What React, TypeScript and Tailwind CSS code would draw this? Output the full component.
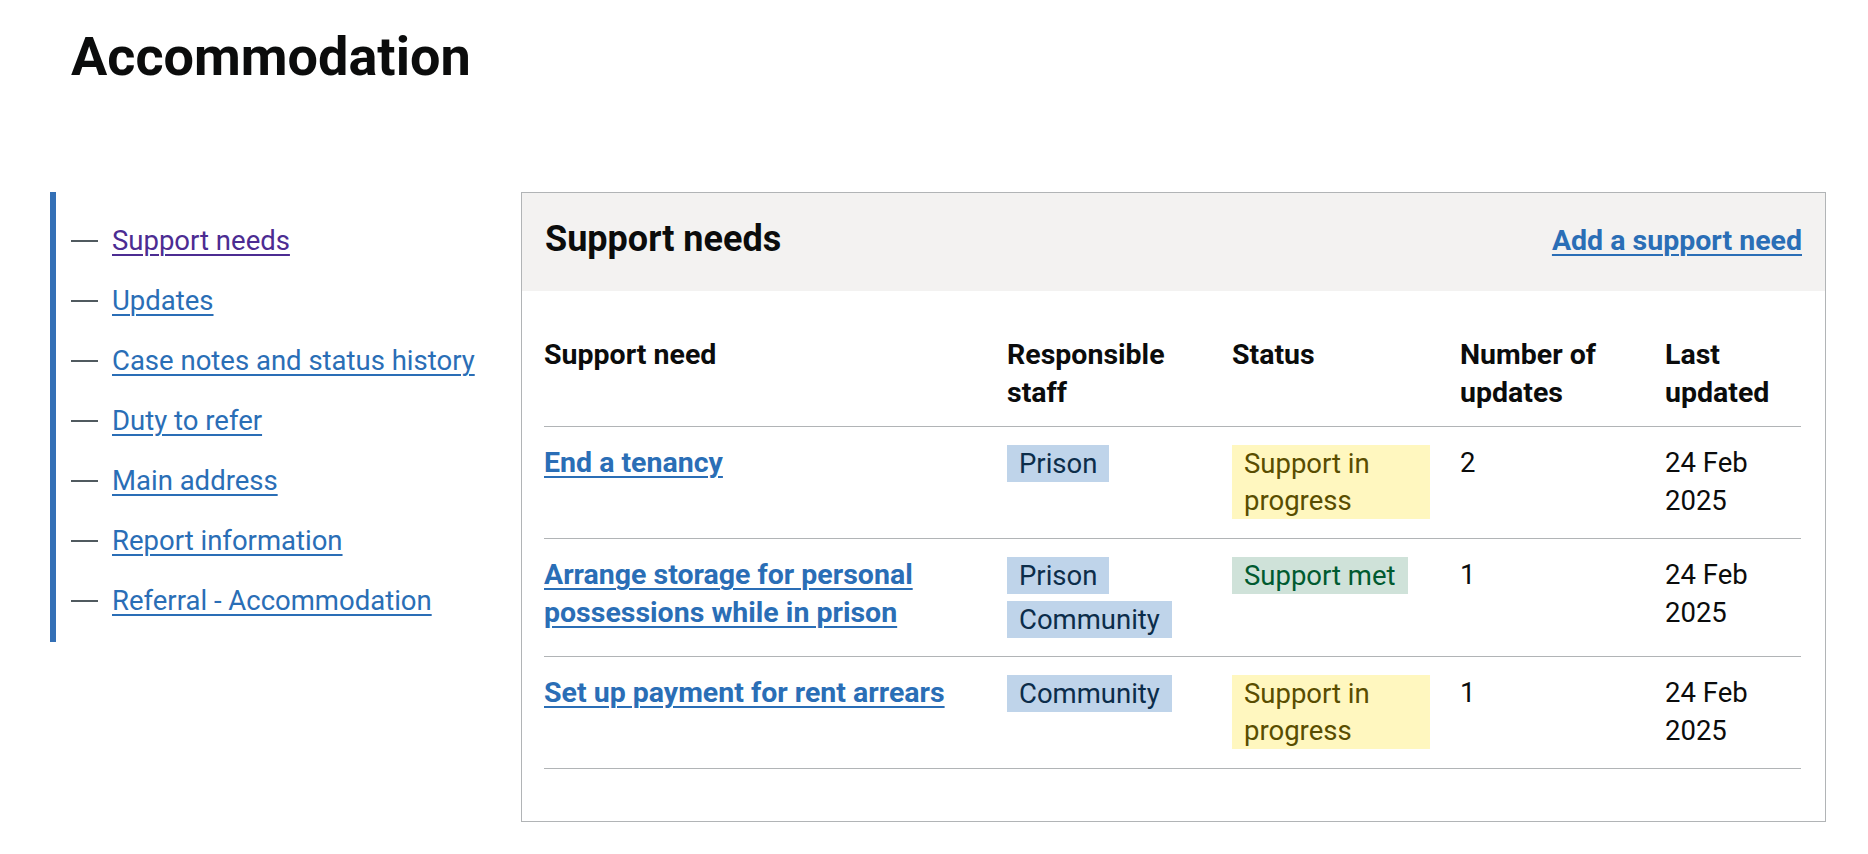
const navItems = [
  { label: "Support needs", visited: true },
  { label: "Updates" },
  { label: "Case notes and status history" },
  { label: "Duty to refer" },
  { label: "Main address" },
  { label: "Report information" },
  { label: "Referral - Accommodation" },
];

type Tone = "blue" | "yellow" | "green";

const toneClass: Record<Tone, string> = {
  blue: "bg-[#bfd4ea] text-[#0c2d4a]",
  yellow: "bg-[#fff7bf] text-[#594d00]",
  green: "bg-[#cfe2d9] text-[#005a30]",
};

const rows: {
  need: string;
  staff: string[];
  status: { label: string; tone: Tone };
  updates: string;
  date: string;
}[] = [
  {
    need: "End a tenancy",
    staff: ["Prison"],
    status: { label: "Support in progress", tone: "yellow" },
    updates: "2",
    date: "24 Feb 2025",
  },
  {
    need: "Arrange storage for personal possessions while in prison",
    staff: ["Prison", "Community"],
    status: { label: "Support met", tone: "green" },
    updates: "1",
    date: "24 Feb 2025",
  },
  {
    need: "Set up payment for rent arrears",
    staff: ["Community"],
    status: { label: "Support in progress", tone: "yellow" },
    updates: "1",
    date: "24 Feb 2025",
  },
];

const Tag = ({ tone, children }: { tone: Tone; children: string }) => (
  <span className={`px-[12px] text-[27.5px] leading-[37px] ${toneClass[tone]}`}>{children}</span>
);

const linkClass =
  "text-[#2a6eb6] underline decoration-[1.5px] underline-offset-[4px]";

const App = () => {
  return (
    <div className="min-h-screen bg-white text-[#0b0c0c] font-['Roboto','Liberation_Sans',sans-serif]">
      <h1 className="pl-[71px] pt-[27px] text-[54px] leading-[60px] font-bold">Accommodation</h1>

      <div className="mt-[105px] flex items-start pl-[50px]">
        <nav className="w-[471px] border-l-[6px] border-[#3470b6] pt-[30px]">
          <ul>
            {navItems.map((item) => (
              <li key={item.label} className="mb-[22.5px] flex items-center pl-[15px] text-[27.5px] leading-[37.5px]">
                <span className="mr-[14px] mt-[1px] h-[2px] w-[27px] shrink-0 bg-[#505a5f]" />
                <a
                  href="#"
                  className={`underline decoration-[1.5px] underline-offset-[4px] ${
                    item.visited ? "text-[#4c2c92]" : "text-[#2a6eb6]"
                  }`}
                >
                  {item.label}
                </a>
              </li>
            ))}
          </ul>
        </nav>

        <section className="w-[1305px] border border-[#b1b4b6]">
          <div className="flex h-[98px] items-start justify-between bg-[#f3f2f1] px-[23px]">
            <h2 className="pt-[24px] text-[36px] leading-[45px] font-bold">Support needs</h2>
            <a href="#" className={`mt-[29px] text-[28.5px] leading-[37.5px] font-bold ${linkClass}`}>
              Add a support need
            </a>
          </div>

          <div className="pl-[22px] pr-[24px] pt-[27px] pb-[52px]">
            <table className="w-full table-fixed border-collapse text-[27.5px] leading-[37.5px]">
              <colgroup>
                <col className="w-[463px]" />
                <col className="w-[225px]" />
                <col className="w-[228px]" />
                <col className="w-[205px]" />
                <col className="w-[136px]" />
              </colgroup>
              <thead>
                <tr className="border-b border-[#b1b4b6] text-[28.5px]">
                  <th className="pr-[30px] pt-[18px] pb-[15px] text-left align-top font-bold">Support need</th>
                  <th className="pr-[30px] pt-[18px] pb-[15px] text-left align-top font-bold">Responsible staff</th>
                  <th className="pr-[30px] pt-[18px] pb-[15px] text-left align-top font-bold">Status</th>
                  <th className="pr-[30px] pt-[18px] pb-[15px] text-left align-top font-bold">Number of updates</th>
                  <th className="pt-[18px] pb-[15px] text-left align-top font-bold">Last updated</th>
                </tr>
              </thead>
              <tbody>
                {rows.map((row) => (
                  <tr key={row.need} className="border-b border-[#b1b4b6]">
                    <td className="pr-[30px] pt-[17px] pb-[19px] align-top">
                      <a href="#" className={`text-[28.5px] font-bold ${linkClass}`}>
                        {row.need}
                      </a>
                    </td>
                    <td className="pr-[30px] pt-[18px] pb-[18px] align-top">
                      <div className="flex flex-col items-start gap-[7px]">
                        {row.staff.map((s) => (
                          <Tag key={s} tone="blue">
                            {s}
                          </Tag>
                        ))}
                      </div>
                    </td>
                    <td className="pr-[30px] pt-[18px] pb-[18px] align-top">
                      <div className="flex items-start">
                        <Tag tone={row.status.tone}>{row.status.label}</Tag>
                      </div>
                    </td>
                    <td className="pr-[30px] pt-[17px] pb-[19px] align-top">{row.updates}</td>
                    <td className="pt-[17px] pb-[19px] align-top">{row.date}</td>
                  </tr>
                ))}
              </tbody>
            </table>
          </div>
        </section>
      </div>
    </div>
  );
};

export default App;
